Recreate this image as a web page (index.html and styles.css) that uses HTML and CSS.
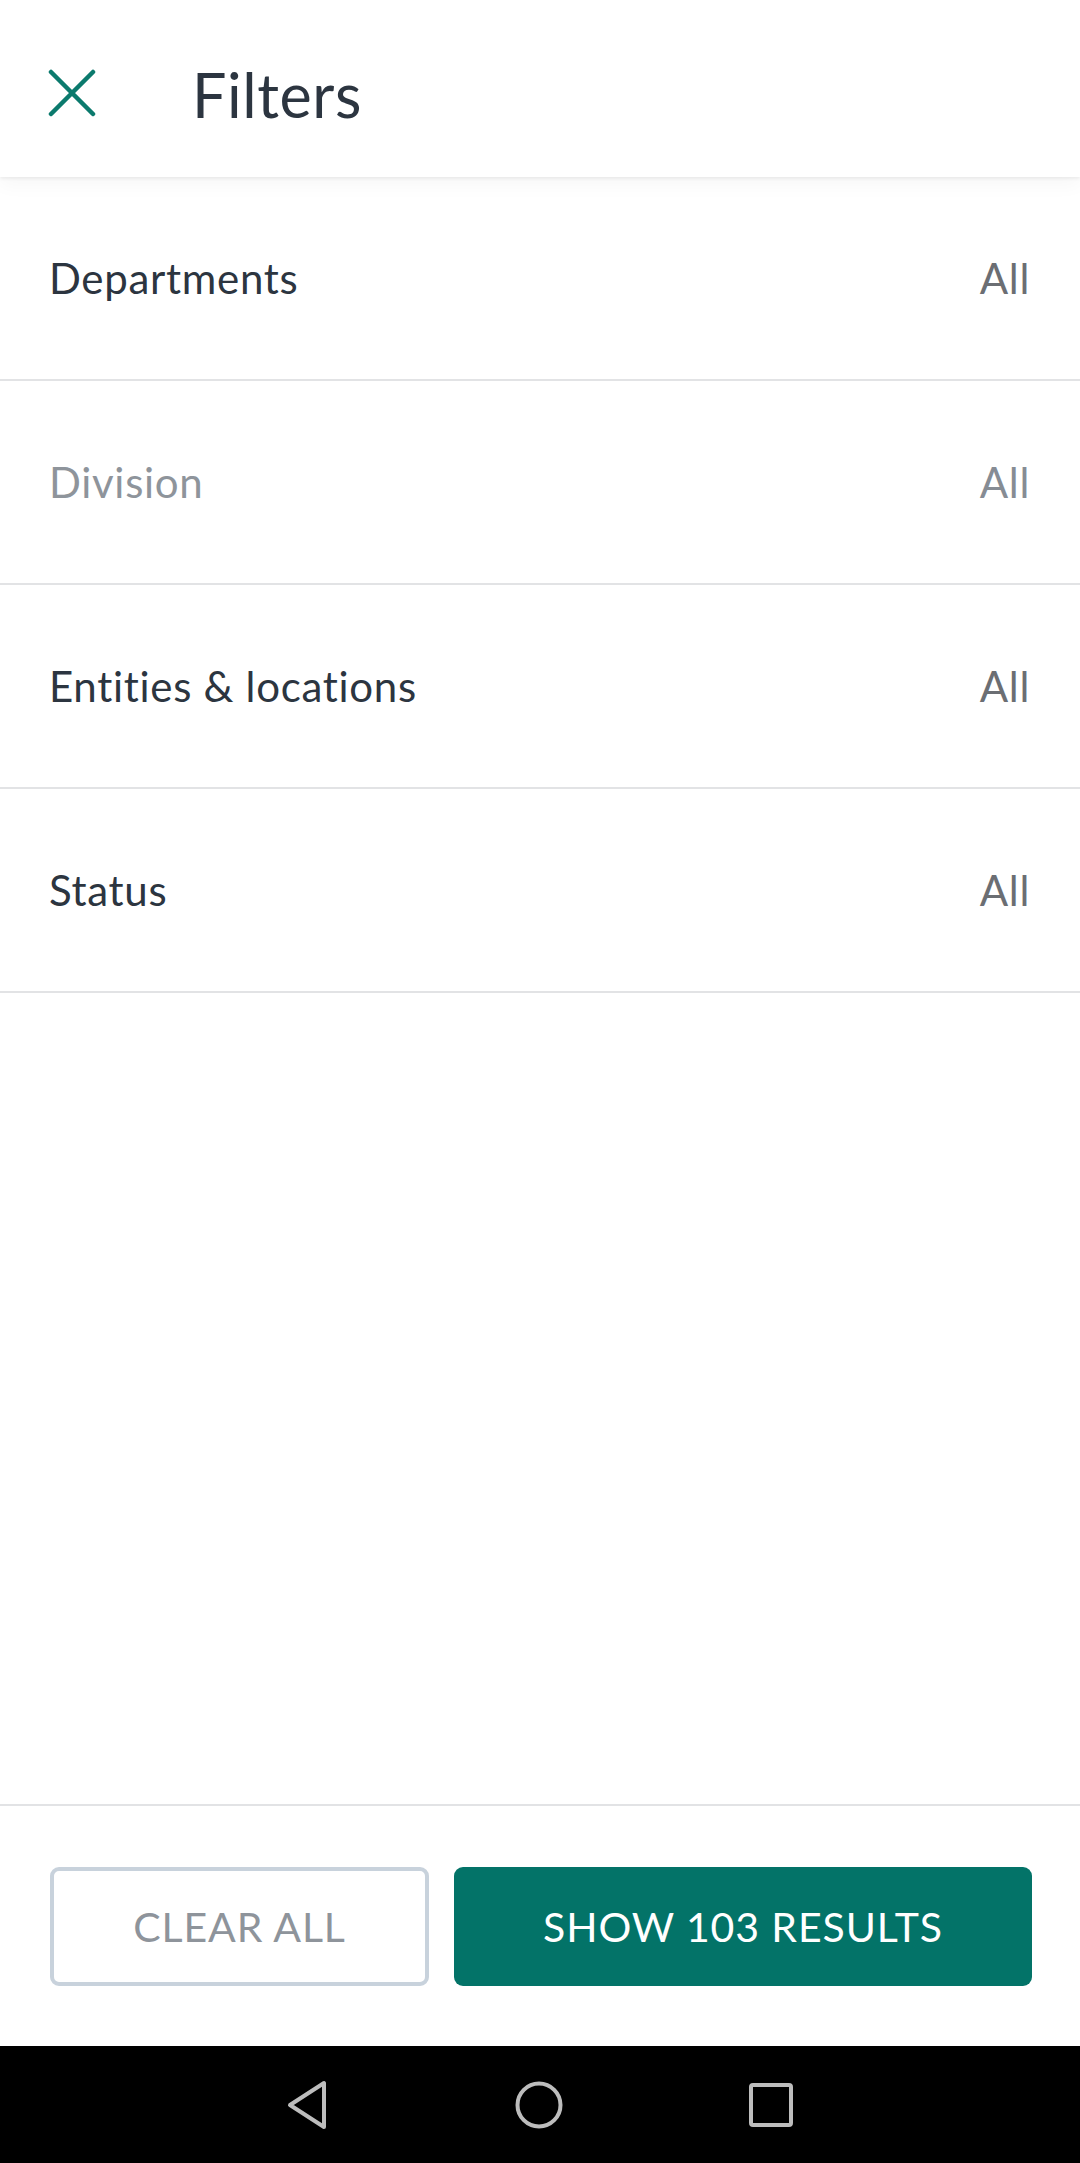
FILE: index.html
```html
<!DOCTYPE html>
<html lang="en">
<head>
<meta charset="utf-8">
<title>Filters</title>
<link rel="stylesheet" href="styles.css">
</head>
<body>
<div class="app">
  <header class="topbar">
    <button class="close" aria-label="Close">
      <svg width="48" height="48" viewBox="0 0 48 48"><path d="M3 3 L45 45 M45 3 L3 45" stroke="#0b7a6d" stroke-width="4.5" stroke-linecap="round" fill="none"/></svg>
    </button>
    <h1 class="title">Filters</h1>
  </header>
  <main class="list">
    <div class="row"><span class="label">Departments</span><span class="value">All</span></div>
    <div class="row disabled"><span class="label">Division</span><span class="value">All</span></div>
    <div class="row"><span class="label">Entities &amp; locations</span><span class="value">All</span></div>
    <div class="row"><span class="label">Status</span><span class="value">All</span></div>
  </main>
  <div class="spacer"></div>
  <footer class="actions">
    <button class="btn btn-outline">CLEAR ALL</button>
    <button class="btn btn-primary">SHOW 103 RESULTS</button>
  </footer>
  <nav class="sysnav">
    <svg width="44" height="50" viewBox="0 0 44 50"><path d="M38 3 L38 47 L4 25 Z" stroke="#bdbdbd" stroke-width="4" stroke-linejoin="round" fill="none"/></svg>
    <svg width="50" height="50" viewBox="0 0 50 50"><circle cx="25" cy="25" r="21.5" stroke="#bdbdbd" stroke-width="4" fill="none"/></svg>
    <svg width="46" height="46" viewBox="0 0 46 46"><rect x="3" y="3" width="40" height="40" rx="2" stroke="#bdbdbd" stroke-width="4" fill="none"/></svg>
  </nav>
</div>
</body>
</html>
```
FILE: styles.css
```css
* { box-sizing: border-box; }
html, body { margin: 0; padding: 0; background: #ffffff; }
body { font-family: "Lato", "Noto Sans", sans-serif; color: #2c3540; }
.app { display: flex; flex-direction: column; width: 1080px; height: 2163px; }
.topbar {
  height: 177px; flex: none; display: flex; align-items: center;
  padding: 8px 0 0 48px; background: #fff; position: relative; z-index: 2;
  box-shadow: 0 2px 3px rgba(0,0,0,0.06), 0 8px 18px rgba(0,0,0,0.035);
}
.close { border: 0; background: none; padding: 0; margin: 0; width: 48px; height: 48px; display: flex; }
.title { margin: 4px 0 0 96px; font-size: 61px; font-weight: 400; color: #2c3540; letter-spacing: 0.6px; }
.list { flex: none; display: flex; flex-direction: column; }
.row {
  height: 204px; display: flex; align-items: center; justify-content: space-between;
  padding: 0 50px 0 49px; border-bottom: 2px solid #e2e3e5; font-size: 42px; letter-spacing: 0.7px;
}
.label { color: #2c3540; }
.value { color: #6b6e73; }
.row.disabled .label { color: #8e949b; }
.row.disabled .value { color: #868c94; }
.spacer { flex: 1; }
.actions {
  flex: none; border-top: 2px solid #e2e3e5; display: flex; gap: 25px;
  padding: 61px 48px 60px 50px;
}
.btn { height: 119px; border-radius: 9px; font-family: "Lato", "Noto Sans", sans-serif; font-size: 41px; letter-spacing: 0.9px; cursor: pointer; }
.btn-outline { width: 379px; background: #fff; border: 4px solid #c8d2dc; color: #8e949b; }
.btn-primary { flex: 1; background: #037368; border: 0; color: #fff; }
.sysnav {
  flex: none; height: 117px; background: #000; display: flex; align-items: center; justify-content: center; gap: 184px;
}
```
